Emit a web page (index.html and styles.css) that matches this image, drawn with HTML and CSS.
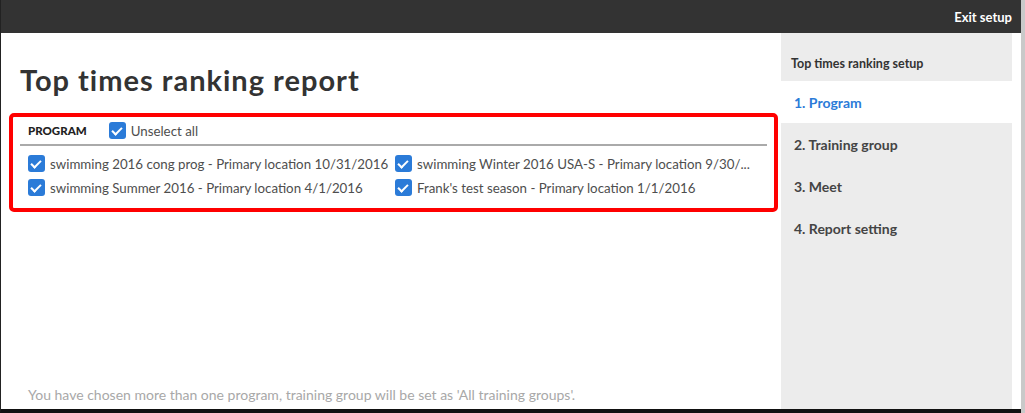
FILE: index.html
```html
<!DOCTYPE html>
<html lang="en">
<head>
  <meta charset="UTF-8" />
  <title>Top times ranking report</title>
  <link rel="stylesheet" href="styles.css">
</head>
<body>
  <div class="app">
    <header class="topbar">
      <a href="#" class="exit">Exit setup</a>
    </header>

    <div class="content">
      <main class="main">
        <h1>Top times ranking report</h1>

        <div class="program-box">
          <div class="program-head">
            <span class="label">PROGRAM</span>
            <label class="check"><span class="box"></span>Unselect all</label>
          </div>
          <div class="program-list">
            <label class="check"><span class="box"></span>swimming 2016 cong prog - Primary location 10/31/2016</label>
            <label class="check"><span class="box"></span>swimming Winter 2016 USA-S - Primary location 9/30/...</label>
            <label class="check"><span class="box"></span>swimming Summer 2016 - Primary location 4/1/2016</label>
            <label class="check"><span class="box"></span>Frank's test season - Primary location 1/1/2016</label>
          </div>
        </div>

        <p class="note">You have chosen more than one program, training group will be set as 'All training groups'.</p>
      </main>

      <aside class="sidebar">
        <div class="side-title">Top times ranking setup</div>
        <div class="step active">1. Program</div>
        <div class="step">2. Training group</div>
        <div class="step">3. Meet</div>
        <div class="step">4. Report setting</div>
      </aside>
    </div>
  </div>
</body>
</html>
```

FILE: styles.css
```css
body {
  margin: 0;
  background: #c9c9c9;
  font-family: 'Lato', 'Liberation Sans', sans-serif;
  color: #333;
}

.app {
  width: 1020px;
  height: 409px;
  background: #fff;
  border-left: 1px solid #222;
  border-bottom: 4px solid #111;
  display: flex;
  flex-direction: column;
}

.topbar {
  height: 33px;
  background: #333;
  display: flex;
  justify-content: flex-end;
  align-items: center;
  padding-right: 9px;
  flex-shrink: 0;
}

.exit {
  color: #fff;
  font-size: 13px;
  font-weight: 700;
  text-decoration: none;
}

.content {
  flex: 1;
  display: flex;
  padding-right: 9px;
}

.main {
  flex: 1;
  display: flex;
  flex-direction: column;
  padding: 0 3px 0 8px;
}

h1 {
  margin: 28px 0 0 11px;
  font-size: 29px;
  font-weight: 700;
  color: #333;
  letter-spacing: 1px;
  line-height: 38px;
}

.program-box {
  margin-top: 14px;
  border: 4px solid #f00;
  border-radius: 5px;
  padding: 0 7px 12px 7px;
}

.program-head {
  display: flex;
  align-items: center;
  gap: 22px;
  height: 27px;
  padding: 0 0 0 8px;
  border-bottom: 2px solid #aaa;
}

.label {
  font-size: 11.5px;
  font-weight: 900;
  color: #222;
}

.program-head .check {
  gap: 5px;
}

.program-list {
  display: grid;
  grid-template-columns: 367px 1fr;
  row-gap: 7px;
  padding: 9px 0 0 8px;
}

.check {
  display: flex;
  align-items: center;
  gap: 5px;
  font-size: 13.3px;
  color: #4e4e4e;
  white-space: nowrap;
}

.box {
  width: 17px;
  height: 17px;
  border-radius: 3px;
  background: #2b7bd8;
  flex-shrink: 0;
  position: relative;
}

.box::after {
  content: "";
  position: absolute;
  left: 5px;
  top: 3px;
  width: 4px;
  height: 8px;
  border: solid #fff;
  border-width: 0 2px 2px 0;
  transform: rotate(45deg);
}

.note {
  margin: auto 0 6px 19px;
  font-size: 14px;
  color: #a8a8a8;
}

.sidebar {
  width: 231px;
  background: #ececec;
  flex-shrink: 0;
}

.side-title {
  height: 48px;
  box-sizing: border-box;
  padding: 23px 10px 0;
  font-size: 12.5px;
  font-weight: 700;
  color: #333;
}

.step {
  height: 42px;
  display: flex;
  align-items: center;
  padding: 0 13px;
  font-size: 14px;
  font-weight: 700;
  color: #444;
}

.step.active {
  background: #fff;
  color: #2b7bd8;
}
```
